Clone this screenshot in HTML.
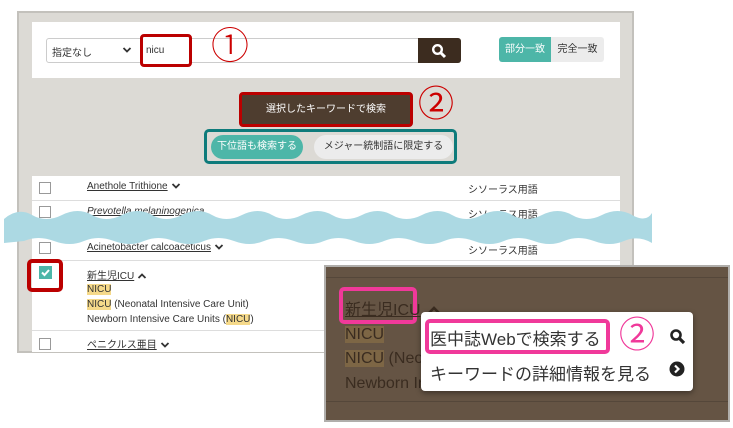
<!DOCTYPE html><html><head><meta charset="utf-8"><style>
*{margin:0;padding:0;box-sizing:border-box}
body{width:733px;height:428px;background:#fff;position:relative;overflow:hidden;font-family:"Liberation Sans","Noto Sans CJK JP",sans-serif;color:#333}
.a{position:absolute}
.u{text-decoration:underline}
.cb{position:absolute;width:12px;height:12px;border:1px solid #999;background:#fff;left:39px}
.t{font-size:10px;white-space:nowrap}
.hl{background:#f5d98a}
.cv{display:inline-block;vertical-align:middle;margin-left:3px}
</style></head><body>
<div class="a" style="left:17px;top:11px;width:617px;height:342px;background:#dcdad5;border:2px solid #c3c1bc"></div>
<div class="a" style="left:32px;top:22px;width:588px;height:56px;background:#fff"></div>
<div class="a" style="left:46px;top:38px;width:415px;height:25px;border:1px solid #ccc;border-radius:3px;background:#fff"></div>
<div class="a t" style="left:52px;top:44px">指定なし</div>
<svg class="a" style="left:122px;top:46px" width="10" height="8"><path d="M1.5 2l3.5 3.5 3.5-3.5" stroke="#333" stroke-width="1.8" fill="none"/></svg>
<div class="a" style="left:140px;top:34px;width:52px;height:33px;border:3px solid #b00;border-radius:4px;background:#fff"></div>
<div class="a t" style="left:146px;top:45px">nicu</div>
<div class="a" style="left:418px;top:38px;width:43px;height:25px;background:#3c2c1f;border-radius:0 3px 3px 0"></div>
<svg class="a" style="left:431px;top:43px" width="16" height="16"><circle cx="6.5" cy="6.5" r="4.3" fill="none" stroke="#fff" stroke-width="2.4"/><path d="M10 10l4 4" stroke="#fff" stroke-width="3"/></svg>
<div class="a" style="left:211px;top:27px;font-size:38px;color:#c00;line-height:40px;font-weight:300">①</div>
<div class="a t" style="left:499px;top:37px;width:52px;height:25px;background:#4db6a8;color:#fff;line-height:25px;text-align:center;border-radius:3px 0 0 3px">部分一致</div>
<div class="a t" style="left:551px;top:37px;width:53px;height:25px;background:#ececec;line-height:25px;text-align:center;border-radius:0 3px 3px 0">完全一致</div>
<div class="a" style="left:239px;top:92px;width:174px;height:35px;border:3px solid #b00;border-radius:4px;background:#4e3d2f;color:#fff;font-size:10px;text-align:center;line-height:29px">選択したキーワードで検索</div>
<div class="a" style="left:418px;top:84px;font-size:36px;color:#c00;line-height:40px">②</div>
<div class="a" style="left:204px;top:129px;width:253px;height:35px;border:3px solid #0e7b7b;border-radius:5px"></div>
<div class="a t" style="left:211px;top:135px;width:92px;height:24px;background:#4db6a8;color:#fff;border-radius:12px;text-align:center;line-height:24px">下位語も検索する</div>
<div class="a t" style="left:314px;top:135px;width:139px;height:24px;background:#ececec;border-radius:12px;text-align:center;line-height:24px">メジャー統制語に限定する</div>
<div class="a" style="left:32px;top:176px;width:588px;height:176px;background:#fff"></div>
<div class="a" style="left:32px;top:200px;width:588px;height:1px;background:#ddd"></div>
<div class="a" style="left:32px;top:260px;width:588px;height:1px;background:#ddd"></div>
<div class="a" style="left:32px;top:330px;width:588px;height:1px;background:#ddd"></div>
<div class="cb" style="top:182px"></div>
<div class="a t" style="left:87px;top:181px"><span class="u">Anethole Trithione</span><svg class="cv" width="10" height="8"><path d="M1.5 2l3.5 3.5 3.5-3.5" stroke="#333" stroke-width="1.8" fill="none"/></svg></div>
<div class="a t" style="left:468px;top:181px">シソーラス用語</div>
<div class="cb" style="top:206px"></div>
<div class="a t u" style="left:87px;top:206px;font-style:italic">Prevotella melaninogenica</div>
<div class="a t" style="left:468px;top:206px">シソーラス用語</div>
<div class="cb" style="top:242px"></div>
<div class="a t" style="left:87px;top:242px"><span class="u">Acinetobacter calcoaceticus</span><svg class="cv" width="10" height="8"><path d="M1.5 2l3.5 3.5 3.5-3.5" stroke="#333" stroke-width="1.8" fill="none"/></svg></div>
<div class="a t" style="left:468px;top:242px">シソーラス用語</div>
<svg class="a" style="left:0;top:205px" width="660" height="45"><path d="M4 14 Q18 2 32 10 T62 10 T92 10 T122 10 T152 10 T182 10 T212 10 T242 10 T272 10 T302 10 T332 10 T362 10 T392 10 T422 10 T452 10 T482 10 T512 10 T542 10 T572 10 T602 10 T632 10 T652 8 L652 38 Q638 30 624 36 T594 36 T564 36 T534 36 T504 36 T474 36 T444 36 T414 36 T384 36 T354 36 T324 36 T294 36 T264 36 T234 36 T204 36 T174 36 T144 36 T114 36 T84 36 T54 36 T24 36 L4 38Z" fill="#acd9e3"/></svg>
<div class="a" style="left:27px;top:259px;width:36px;height:33px;border:4px solid #b00;border-radius:5px"></div>
<div class="a" style="left:39px;top:266px;width:13px;height:13px;background:#4db6a8"></div>
<svg class="a" style="left:39px;top:266px" width="13" height="13"><path d="M3 6.5l2.5 2.5 4.5-5" stroke="#fff" stroke-width="2" fill="none"/></svg>
<div class="a t" style="left:87px;top:267px"><span class="u">新生児ICU</span><svg class="cv" width="10" height="8"><path d="M1.5 6l3.5-3.5 3.5 3.5" stroke="#333" stroke-width="1.8" fill="none"/></svg></div>
<div class="a t" style="left:468px;top:267px">シソーラス用語</div>
<div class="a t" style="left:87px;top:284px"><span class="hl">NICU</span></div>
<div class="a t" style="left:87px;top:299px"><span class="hl">NICU</span> (Neonatal Intensive Care Unit)</div>
<div class="a t" style="left:87px;top:314px">Newborn Intensive Care Units (<span class="hl">NICU</span>)</div>
<div class="cb" style="top:338px"></div>
<div class="a t" style="left:87px;top:336px"><span class="u">ペニクルス亜目</span><svg class="cv" width="10" height="8"><path d="M1.5 2l3.5 3.5 3.5-3.5" stroke="#333" stroke-width="1.8" fill="none"/></svg></div>
<div class="a" style="left:324px;top:265px;width:406px;height:157px;background:#655444;border:2px solid #b0aeab;overflow:hidden">
<div class="a" style="left:0;top:10px;width:406px;height:1px;background:#55473a"></div>
<div class="a" style="left:0;top:134px;width:406px;height:1px;background:#55473a"></div>
<div class="a" style="left:13px;top:20px;width:78px;height:37px;border:4px solid #f0399a;border-radius:5px"></div>
<div class="a" style="left:19px;top:29px;font-size:16px;color:#3a2c20;white-space:nowrap"><span class="u">新生児ICU</span><svg class="cv" width="16" height="12" style="margin-left:5px"><path d="M2 9l6-6 6 6" stroke="#3a2c20" stroke-width="2.6" fill="none"/></svg></div>
<div class="a" style="left:19px;top:59px;font-size:16px;color:#3a2c20"><span style="background:#7d6645">NICU</span></div>
<div class="a" style="left:19px;top:83px;font-size:16px;color:#3a2c20;white-space:nowrap"><span style="background:#7d6645">NICU</span> (Neonatal</div>
<div class="a" style="left:19px;top:108px;font-size:16px;color:#3a2c20;white-space:nowrap">Newborn Intensive</div>
</div>
<div class="a" style="left:421px;top:312px;width:272px;height:79px;background:#fff;border-radius:4px;box-shadow:0 2px 6px rgba(0,0,0,.4)"></div>
<div class="a" style="left:425px;top:319px;width:185px;height:35px;border:4px solid #f0399a;border-radius:5px"></div>
<div class="a" style="left:430px;top:325px;font-size:17px;color:#333;white-space:nowrap">医中誌Webで検索する</div>
<div class="a" style="left:619px;top:314px;font-size:36px;color:#f0399a;line-height:42px">②</div>
<svg class="a" style="left:669px;top:328px" width="18" height="18"><circle cx="7" cy="7" r="4.5" fill="none" stroke="#222" stroke-width="2.6"/><path d="M10.5 10.5l4.5 4.5" stroke="#222" stroke-width="3.2"/></svg>
<div class="a" style="left:430px;top:360px;font-size:17px;color:#333;white-space:nowrap">キーワードの詳細情報を見る</div>
<svg class="a" style="left:669px;top:361px" width="18" height="18"><circle cx="8" cy="8" r="7.5" fill="#222"/><path d="M6 4.5l3.5 3.5-3.5 3.5" stroke="#fff" stroke-width="2.2" fill="none"/></svg>
</body></html>
